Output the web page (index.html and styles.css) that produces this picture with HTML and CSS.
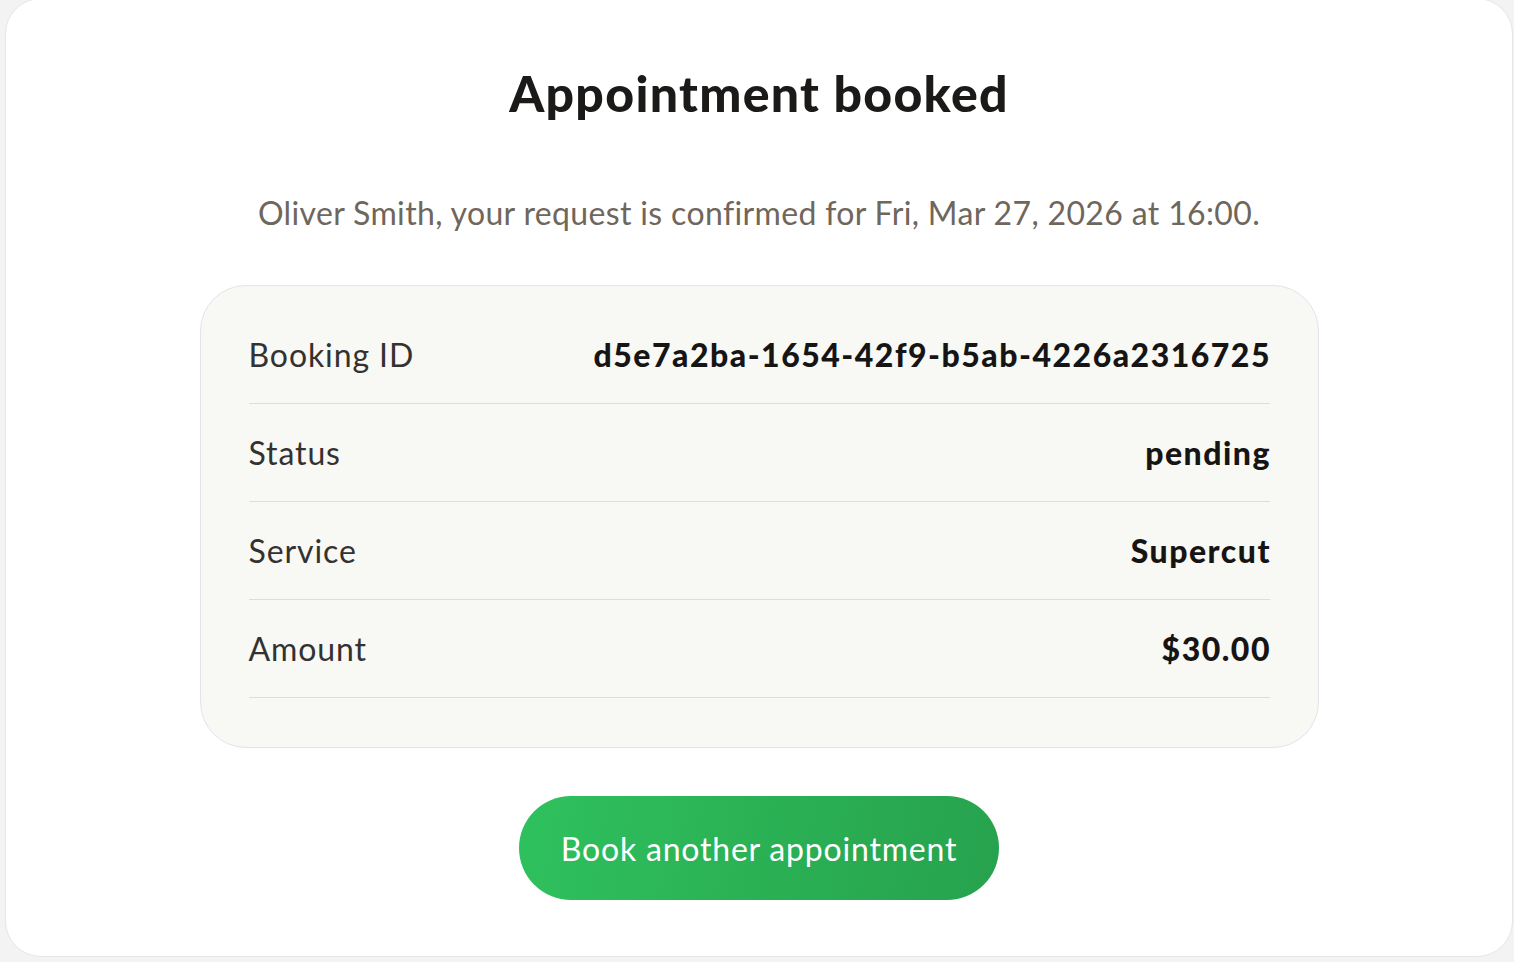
FILE: index.html
```html
<!DOCTYPE html>
<html lang="en">
<head>
<meta charset="utf-8">
<title>Appointment booked</title>
<link rel="stylesheet" href="styles.css">
</head>
<body>
<main class="card">
  <h1 class="title">Appointment booked</h1>
  <p class="subtitle">Oliver Smith, your request is confirmed for Fri, Mar 27, 2026 at 16:00.</p>
  <section class="details">
    <div class="row"><span class="label">Booking ID</span><span class="value">d5e7a2ba-1654-42f9-b5ab-4226a2316725</span></div>
    <div class="row"><span class="label">Status</span><span class="value">pending</span></div>
    <div class="row"><span class="label">Service</span><span class="value">Supercut</span></div>
    <div class="row"><span class="label">Amount</span><span class="value">$30.00</span></div>
  </section>
  <button class="btn" type="button">Book another appointment</button>
</main>
</body>
</html>
```
FILE: styles.css
```css
* { box-sizing: border-box; }
html, body { margin: 0; padding: 0; }
body {
  background: #f3f3f3;
  font-family: "Lato", "Noto Sans", sans-serif;
  height: 962px;
  overflow: hidden;
}
.card {
  margin: -2px 1px 0 5px;
  width: 1508px;
  height: 959px;
  background: #fff;
  border: 1px solid #e6e6e6;
  border-radius: 36px;
  display: flex;
  flex-direction: column;
  align-items: center;
  padding-top: 64px;
}
.title {
  margin: 0;
  font-size: 50px;
  line-height: 60px;
  font-weight: 900;
  color: #1b1a19;
  letter-spacing: 1.3px;
}
.subtitle {
  margin: 70px 0 0;
  font-size: 32px;
  line-height: 40px;
  color: #6f665c;
  letter-spacing: 0.35px;
}
.details {
  margin-top: 52px;
  width: 1119px;
  background: #f8f8f4;
  border: 1px solid #e4e3ec;
  border-radius: 46px;
  padding: 20px 48px 49px;
}
.row {
  display: flex;
  justify-content: space-between;
  align-items: center;
  height: 98px;
  border-bottom: 1px solid #e7dcc9;
}
.label {
  font-size: 32px;
  letter-spacing: 0.9px;
  color: #333231;
}
.value {
  font-size: 32px;
  font-weight: 900;
  letter-spacing: 1.5px;
  margin-right: -1.5px;
  color: #161514;
}
.btn {
  margin-top: 48px;
  width: 480px;
  height: 104px;
  border: none;
  border-radius: 52px;
  background: linear-gradient(100deg, #2fc15e 0%, #2aae53 60%, #27a24e 100%);
  color: #fff;
  font-family: "Lato", "Noto Sans", sans-serif;
  font-size: 32px;
  letter-spacing: 0.8px;
  padding: 0;
}
```
